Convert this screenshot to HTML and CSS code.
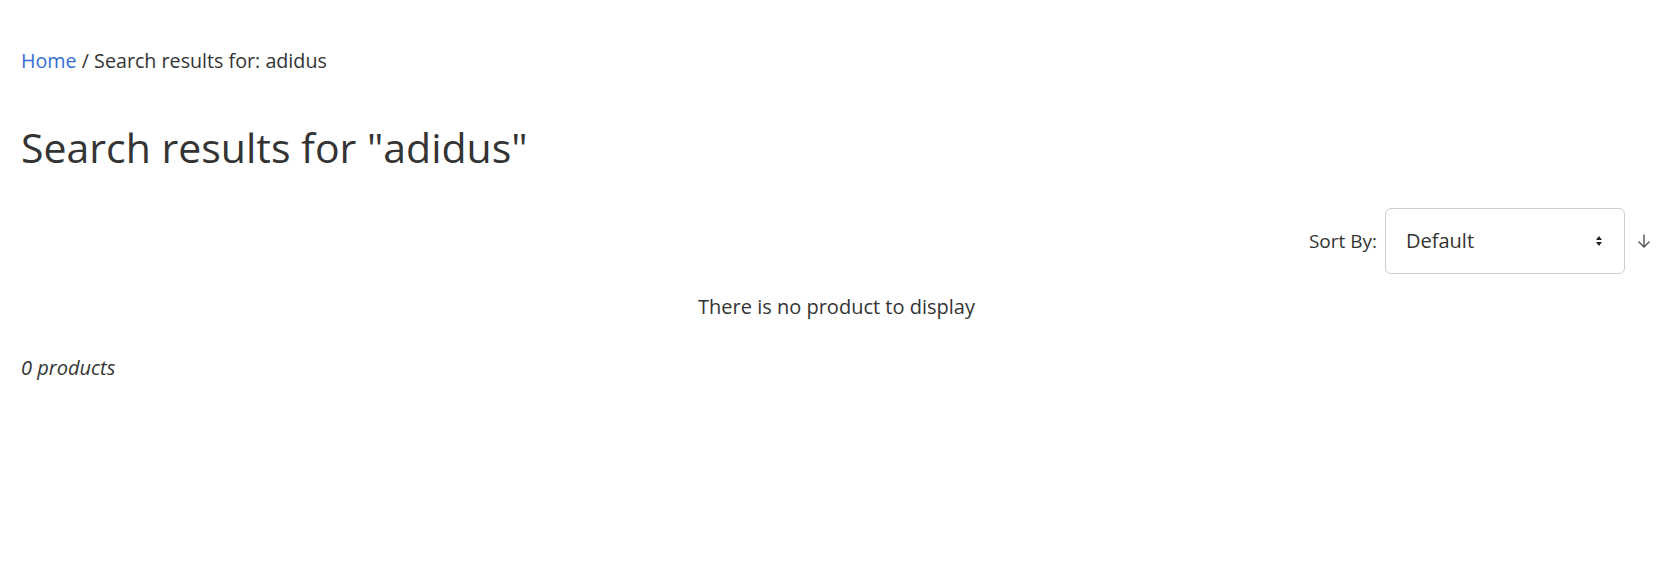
FILE: index.html
```html
<!DOCTYPE html>
<html lang="en">
<head>
<meta charset="utf-8">
<title>Search results</title>
<link rel="stylesheet" href="styles.css">
</head>
<body>
<div class="page">
  <nav class="breadcrumb"><a href="#" class="crumb-link">Home</a> / Search results for: adidus</nav>
  <h1 class="title">Search results for "adidus"</h1>
  <div class="sort-row">
    <label class="sort-label" for="sort">Sort By:</label>
    <div class="select-wrap">
      <select id="sort" class="sort-select"><option>Default</option></select>
      <svg class="select-caret" width="8" height="12" viewBox="0 0 8 12"><path d="M4 1 L7 5 L1 5 Z M4 11 L7 7 L1 7 Z" fill="#222"/></svg>
    </div>
    <a href="#" class="sort-dir" aria-label="Sort direction">
      <svg width="16" height="16" viewBox="0 0 16 16"><path d="M8 1.5 V14 M2.5 8.5 L8 14 L13.5 8.5" fill="none" stroke="#555" stroke-width="1.4"/></svg>
    </a>
  </div>
  <p class="empty">There is no product to display</p>
  <p class="count">0 products</p>
</div>
</body>
</html>
```
FILE: styles.css
```css
html, body {
  margin: 0;
  padding: 0;
  background: #fff;
}
body {
  font-family: "Open Sans", "Noto Sans", sans-serif;
  color: #343434;
  font-size: 20px;
  line-height: 1.5;
}
.page {
  padding: 46px 14px 0 21px;
}
.breadcrumb {
  margin: 0;
  font-size: 19.7px;
  line-height: 30px;
}
.crumb-link {
  color: #3670d4;
  text-decoration: none;
}
.title {
  margin: 47px 0 0;
  font-size: 41px;
  font-weight: 400;
  line-height: 1.2;
}
.sort-row {
  margin-top: 36px;
  display: flex;
  justify-content: flex-end;
  align-items: center;
  font-size: 19px;
}
.sort-label {
  margin-right: 8px;
}
.select-wrap {
  position: relative;
}
.sort-select {
  appearance: none;
  -webkit-appearance: none;
  display: block;
  width: 240px;
  height: 66px;
  padding: 0 36px 0 20px;
  border: 1px solid #cfcfcf;
  border-radius: 6px;
  background: #fff;
  color: #343434;
  font: inherit;
  font-size: 20px;
}
.select-caret {
  position: absolute;
  right: 22px;
  top: 27px;
}
.sort-dir {
  display: flex;
  margin-left: 11px;
}
.empty {
  margin: 18px 0 0;
  text-align: center;
}
.count {
  margin: 31px 0 0;
  font-style: italic;
}
```
